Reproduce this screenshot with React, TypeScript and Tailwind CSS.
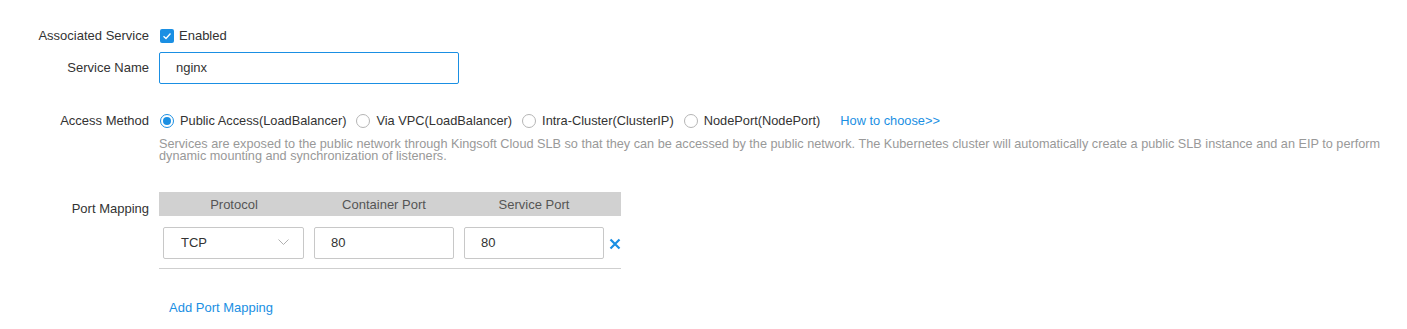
import React from 'react';

const font = { fontFamily: '"Liberation Sans", Arial, sans-serif' };

const Radio: React.FC<{ checked?: boolean; label: string }> = ({ checked, label }) => (
  <label className="flex items-center mr-[10px]">
    <span
      className={`w-[14px] h-[14px] rounded-full border flex items-center justify-center bg-white ${
        checked ? 'border-[#1a8fe3]' : 'border-[#b5b5b5]'
      }`}
    >
      {checked && <span className="w-[8px] h-[8px] rounded-full bg-[#1a8fe3]" />}
    </span>
    <span className="ml-[6px] text-[#333]">{label}</span>
  </label>
);

const Row: React.FC<{ label: string; className?: string; labelClass?: string; children: React.ReactNode }> = ({
  label,
  className,
  labelClass,
  children,
}) => (
  <div className={`flex ${className ?? ''}`}>
    <div className={`w-[149px] shrink-0 text-right text-[13px] text-[#333] ${labelClass ?? ''}`}>{label}</div>
    <div className="ml-[10px] flex-1">{children}</div>
  </div>
);

export default function App() {
  return (
    <div className="w-[1407px] h-[329px] bg-white text-[13px] leading-[14px] overflow-hidden" style={font}>
      <div className="pt-[29px]">
        <Row label="Associated Service" className="items-center">
          <div className="flex items-center">
            <span className="w-[14px] h-[14px] rounded-[2px] bg-[#1a8fe3] flex items-center justify-center ml-[1px]">
              <svg width="10" height="10" viewBox="0 0 10 10" fill="none">
                <path d="M1.5 5.2 L4 7.5 L8.5 2.5" stroke="white" strokeWidth="1.3" />
              </svg>
            </span>
            <span className="ml-[5px] text-[#333]">Enabled</span>
          </div>
        </Row>

        <Row label="Service Name" className="items-center mt-[9px]">
          <div className="w-[300px] h-[32px] border border-[#1a8fe3] rounded-[2px] flex items-center pl-[16px] text-[#333]">
            nginx
          </div>
        </Row>

        <Row label="Access Method" className="mt-[30px]">
          <div className="flex items-center text-[12.8px]">
            <div className="ml-[1px] flex items-center">
              <Radio checked label="Public Access(LoadBalancer)" />
              <Radio label="Via VPC(LoadBalancer)" />
              <Radio label="Intra-Cluster(ClusterIP)" />
              <Radio label="NodePort(NodePort)" />
            </div>
            <span className="ml-[10px] text-[#1a8fe3]">How to choose&gt;&gt;</span>
          </div>
          <p className="mt-[10px] text-[12.7px] text-[#999] leading-[12px] pr-[16px]">
            Services are exposed to the public network through Kingsoft Cloud SLB so that they can be accessed by the public network. The Kubernetes cluster will automatically create a public SLB instance and an EIP to perform dynamic mounting and synchronization of listeners.
          </p>
        </Row>

        <Row label="Port Mapping" className="mt-[31px]" labelClass="mt-[9px]">
          <div className="w-[462px] -mt-[1px]">
            <div className="h-[24px] bg-[#d1d1d1] flex items-center pt-[1px] text-[#555]">
              <div className="w-[150px] text-center">Protocol</div>
              <div className="w-[150px] text-center">Container Port</div>
              <div className="w-[150px] text-center">Service Port</div>
            </div>
            <div className="flex items-center h-[53px] border-b border-[#cfcfcf]">
              <div className="ml-[4px] mt-[1px] w-[141px] h-[32px] border border-[#c8c8c8] rounded-[2px] flex items-center justify-between pl-[17px] pr-[14px] text-[#333]">
                <span>TCP</span>
                <svg width="11" height="7" viewBox="0 0 11 7" fill="none">
                  <path d="M0.5 0.5 L5.5 5.5 L10.5 0.5" stroke="#b0b0b0" strokeWidth="1" />
                </svg>
              </div>
              <div className="ml-[10px] mt-[1px] w-[140px] h-[32px] border border-[#c8c8c8] rounded-[2px] flex items-center pl-[16px] text-[#333]">
                80
              </div>
              <div className="ml-[10px] mt-[1px] w-[140px] h-[32px] border border-[#c8c8c8] rounded-[2px] flex items-center pl-[16px] text-[#333]">
                80
              </div>
              <svg className="ml-[5px] mt-[3px]" width="12" height="12" viewBox="0 0 12 12" fill="none">
                <path d="M1.5 1.5 L10.5 10.5 M10.5 1.5 L1.5 10.5" stroke="#1a8fe3" strokeWidth="2.2" />
              </svg>
            </div>
            <div className="mt-[32px] ml-[10px] text-[#1a8fe3]">Add Port Mapping</div>
          </div>
        </Row>
      </div>
    </div>
  );
}
